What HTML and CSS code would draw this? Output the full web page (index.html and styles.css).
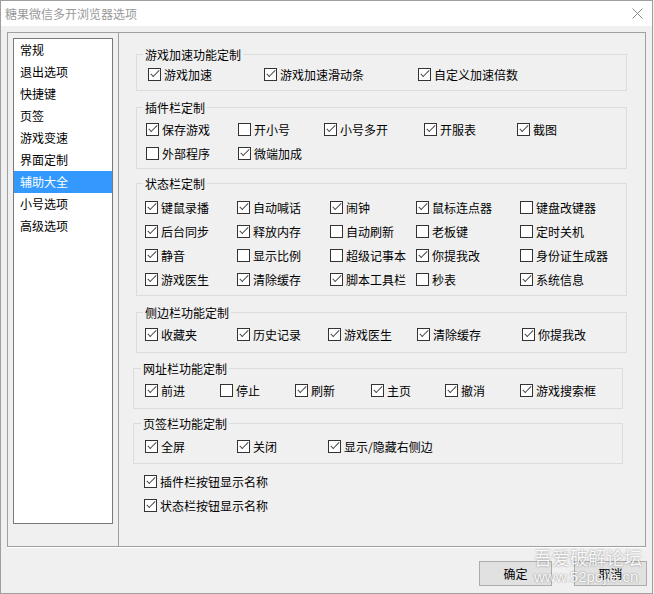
FILE: index.html
```html
<!DOCTYPE html>
<html lang="zh-CN">
<head>
    <meta charset="UTF-8">
    <title>糖果微信多开浏览器选项</title>
    <link rel="stylesheet" href="styles.css">
</head>
<body>
    <div class="window">
        <div class="titlebar">
            <span class="title">糖果微信多开浏览器选项</span>
            <svg class="close" width="11" height="11" viewBox="0 0 11 11">
                <path d="M0.5 0.5 L10.5 10.5 M10.5 0.5 L0.5 10.5" stroke="#8a8a8a" stroke-width="1" fill="none"/>
            </svg>
        </div>

        <div class="frame">
            <!-- 左侧分类列表 -->
            <div class="pane-left">
                <ul class="listbox">
                    <li>常规</li>
                    <li>退出选项</li>
                    <li>快捷键</li>
                    <li>页签</li>
                    <li>游戏变速</li>
                    <li>界面定制</li>
                    <li class="selected">辅助大全</li>
                    <li>小号选项</li>
                    <li>高级选项</li>
                </ul>
            </div>

            <!-- 右侧选项 -->
            <div class="pane-right">
                <fieldset class="group g1">
                    <legend>游戏加速功能定制</legend>
                    <div class="grid">
                        <label class="cb"><span class="box on"></span>游戏加速</label>
                        <label class="cb"><span class="box on"></span>游戏加速滑动条</label>
                        <label class="cb"><span class="box on"></span>自定义加速倍数</label>
                    </div>
                </fieldset>

                <fieldset class="group g2">
                    <legend>插件栏定制</legend>
                    <div class="grid">
                        <label class="cb"><span class="box on"></span>保存游戏</label>
                        <label class="cb"><span class="box"></span>开小号</label>
                        <label class="cb"><span class="box on"></span>小号多开</label>
                        <label class="cb"><span class="box on"></span>开服表</label>
                        <label class="cb"><span class="box on"></span>截图</label>
                        <label class="cb"><span class="box"></span>外部程序</label>
                        <label class="cb"><span class="box on"></span>微端加成</label>
                    </div>
                </fieldset>

                <fieldset class="group g3">
                    <legend>状态栏定制</legend>
                    <div class="grid">
                        <label class="cb"><span class="box on"></span>键鼠录播</label>
                        <label class="cb"><span class="box on"></span>自动喊话</label>
                        <label class="cb"><span class="box on"></span>闹钟</label>
                        <label class="cb"><span class="box on"></span>鼠标连点器</label>
                        <label class="cb"><span class="box"></span>键盘改键器</label>

                        <label class="cb"><span class="box on"></span>后台同步</label>
                        <label class="cb"><span class="box on"></span>释放内存</label>
                        <label class="cb"><span class="box"></span>自动刷新</label>
                        <label class="cb"><span class="box"></span>老板键</label>
                        <label class="cb"><span class="box"></span>定时关机</label>

                        <label class="cb"><span class="box on"></span>静音</label>
                        <label class="cb"><span class="box"></span>显示比例</label>
                        <label class="cb"><span class="box"></span>超级记事本</label>
                        <label class="cb"><span class="box on"></span>你提我改</label>
                        <label class="cb"><span class="box"></span>身份证生成器</label>

                        <label class="cb"><span class="box on"></span>游戏医生</label>
                        <label class="cb"><span class="box on"></span>清除缓存</label>
                        <label class="cb"><span class="box on"></span>脚本工具栏</label>
                        <label class="cb"><span class="box"></span>秒表</label>
                        <label class="cb"><span class="box on"></span>系统信息</label>
                    </div>
                </fieldset>

                <fieldset class="group g4">
                    <legend>侧边栏功能定制</legend>
                    <div class="grid">
                        <label class="cb"><span class="box on"></span>收藏夹</label>
                        <label class="cb"><span class="box on"></span>历史记录</label>
                        <label class="cb"><span class="box on"></span>游戏医生</label>
                        <label class="cb"><span class="box on"></span>清除缓存</label>
                        <label class="cb"><span class="box on"></span>你提我改</label>
                    </div>
                </fieldset>

                <fieldset class="group g5">
                    <legend>网址栏功能定制</legend>
                    <div class="grid">
                        <label class="cb"><span class="box on"></span>前进</label>
                        <label class="cb"><span class="box"></span>停止</label>
                        <label class="cb"><span class="box on"></span>刷新</label>
                        <label class="cb"><span class="box on"></span>主页</label>
                        <label class="cb"><span class="box on"></span>撤消</label>
                        <label class="cb"><span class="box on"></span>游戏搜索框</label>
                    </div>
                </fieldset>

                <fieldset class="group g6">
                    <legend>页签栏功能定制</legend>
                    <div class="grid">
                        <label class="cb"><span class="box on"></span>全屏</label>
                        <label class="cb"><span class="box on"></span>关闭</label>
                        <label class="cb"><span class="box on"></span>显示/隐藏右侧边</label>
                    </div>
                </fieldset>

                <div class="singles">
                    <label class="cb"><span class="box on"></span>插件栏按钮显示名称</label>
                    <label class="cb"><span class="box on"></span>状态栏按钮显示名称</label>
                </div>
            </div>
        </div>

        <div class="footer">
            <button class="btn">确定</button>
            <button class="btn">取消</button>
        </div>

        <div class="watermark">
            <div class="wm-cn">吾爱破解论坛</div>
            <div class="wm-url">www.52pojie.cn</div>
        </div>
    </div>
</body>
</html>
```

FILE: styles.css
```css
body {
    margin: 0;
    font-family: "Noto Sans CJK SC", "Microsoft YaHei", sans-serif;
    font-size: 12px;
    color: #000;
    background: #f0f0f0;
}
.window {
    position: relative;
    box-sizing: border-box;
    width: 653px;
    height: 594px;
    border: 1px solid #9e9e9e;
    background: #f0f0f0;
}
.titlebar {
    height: 25px;
    background: #fff;
    display: flex;
    align-items: center;
    justify-content: space-between;
    padding: 0 9px 0 4px;
}
.title {
    color: #999;
    line-height: 14px;
}
.close {
    display: block;
}
.frame {
    box-sizing: border-box;
    height: 515px;
    margin: 6px 6px 0 6px;
    border: 1px solid #a0a0a0;
    box-shadow: 0 1px 0 #fff;
    display: flex;
}
.pane-left {
    width: 111px;
    border-right: 1px solid #a0a0a0;
    padding: 5px 0 0 5px;
    box-sizing: border-box;
    flex: none;
}
.listbox {
    box-sizing: border-box;
    width: 100px;
    height: 486px;
    margin: 0;
    padding: 0;
    list-style: none;
    background: #fff;
    border: 1px solid #7a7a7a;
}
.listbox li {
    height: 22px;
    line-height: 22px;
    padding-left: 6px;
}
.listbox li.selected {
    background: #3399ff;
    color: #fff;
}
.pane-right {
    flex: 1;
    padding-top: 15px;
}
.group {
    margin: 0 18px 0 17px;
    padding: 0 0 0 8px;
    border: 1px solid #dcdcdc;
    min-width: 0;
}
.group legend {
    padding: 0 2px;
    margin-left: -2px;
    line-height: 13px;
}
.grid {
    display: grid;
    grid-auto-rows: 24px;
}
.cb {
    display: flex;
    align-items: center;
    height: 24px;
    white-space: nowrap;
}
.box {
    box-sizing: border-box;
    width: 13px;
    height: 13px;
    border: 1px solid #333;
    background: #fff;
    margin-right: 3px;
    position: relative;
    flex: none;
}
.box.on::after {
    content: "";
    position: absolute;
    left: 4px;
    top: -1px;
    width: 3px;
    height: 8px;
    border: solid #444;
    border-width: 0 1px 1px 0;
    transform: rotate(45deg);
}

.g1 { padding-top: 1px; padding-bottom: 4px; }
.g1 .grid { padding-left: 3px; grid-template-columns: 116px 154px 1fr; }

.g2 { margin-top: 10px; padding-top: 3px; padding-bottom: 3px; }
.g2 .grid { padding-left: 1px; grid-template-columns: 92px 86px 100px 93px 1fr; }

.g3 { margin-top: 8px; padding-top: 5px; padding-bottom: 4px; }
.g3 .grid { grid-template-columns: 92px 93px 86px 104px 1fr; }

.g4 { margin-top: 10px; padding-top: 3px; padding-bottom: 6px; }
.g4 .grid { grid-template-columns: 92px 91px 89px 105px 1fr; }

.g5 { margin: 9px 22px 0 14px; padding: 3px 0 6px 9px; }
.g5 .grid { padding-left: 2px; grid-template-columns: 75px 75px 76px 74px 75px 1fr; }

.g6 { margin: 8px 22px 0 14px; padding: 4px 0 5px 9px; }
.g6 .grid { padding-left: 2px; grid-template-columns: 92px 91px 1fr; }

.singles {
    margin-top: 5px;
    padding-left: 25px;
}
.footer {
    display: flex;
    justify-content: flex-end;
    gap: 22px;
    padding: 14px 5px 0 0;
}
.btn {
    box-sizing: border-box;
    width: 73px;
    height: 25px;
    padding: 0;
    font-family: inherit;
    font-size: 12px;
    color: #000;
    background: #e1e1e1;
    border: 1px solid #adadad;
}
.watermark {
    position: absolute;
    left: 533px;
    top: 545px;
    width: 114px;
    color: rgba(255, 255, 255, 0.95);
    text-shadow: 0 0 2px rgba(0, 0, 0, 0.45);
    pointer-events: none;
}
.wm-cn {
    font-size: 18px;
    line-height: 22px;
}
.wm-url {
    font-family: "Liberation Sans", Arial, sans-serif;
    font-size: 15px;
    line-height: 18px;
}
```
